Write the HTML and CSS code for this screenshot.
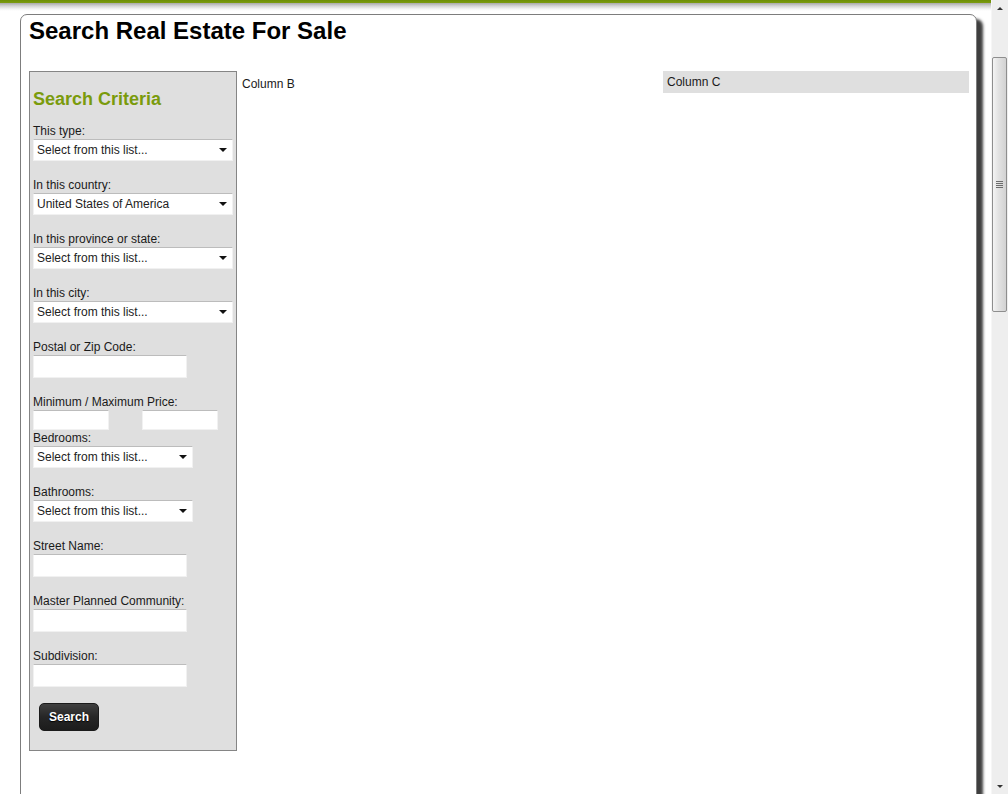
FILE: index.html
```html
<!DOCTYPE html>
<html>
<head>
  <title>Search Real Estate For Sale</title>
  <link rel="stylesheet" href="styles.css">
</head>
<body>
  <div class="window">
    <div class="page">
      <div class="topbar"></div>
      <div class="card">
        <h1>Search Real Estate For Sale</h1>
        <div class="columns">
          <form class="col-a" onsubmit="return false;">
            <h2>Search Criteria</h2>

            <div class="field">
              <label>This type:</label>
              <span class="select-wrap wide">
                <select><option>Select from this list...</option></select>
              </span>
            </div>

            <div class="field">
              <label>In this country:</label>
              <span class="select-wrap wide">
                <select><option>United States of America</option></select>
              </span>
            </div>

            <div class="field">
              <label>In this province or state:</label>
              <span class="select-wrap wide">
                <select><option>Select from this list...</option></select>
              </span>
            </div>

            <div class="field">
              <label>In this city:</label>
              <span class="select-wrap wide">
                <select><option>Select from this list...</option></select>
              </span>
            </div>

            <div class="field">
              <label>Postal or Zip Code:</label>
              <input type="text" class="text-box">
            </div>

            <div class="field price">
              <label>Minimum / Maximum Price:</label>
              <div class="price-row">
                <input type="text" class="text-box small">
                <input type="text" class="text-box small">
              </div>
            </div>

            <div class="field">
              <label>Bedrooms:</label>
              <span class="select-wrap narrow">
                <select><option>Select from this list...</option></select>
              </span>
            </div>

            <div class="field">
              <label>Bathrooms:</label>
              <span class="select-wrap narrow">
                <select><option>Select from this list...</option></select>
              </span>
            </div>

            <div class="field">
              <label>Street Name:</label>
              <input type="text" class="text-box">
            </div>

            <div class="field">
              <label>Master Planned Community:</label>
              <input type="text" class="text-box">
            </div>

            <div class="field">
              <label>Subdivision:</label>
              <input type="text" class="text-box">
            </div>

            <button class="btn-search">Search</button>
          </form>

          <div class="col-b">Column B</div>
          <div class="col-c">Column C</div>
        </div>
      </div>
    </div>

    <div class="scrollbar">
      <div class="sb-arrow up"></div>
      <div class="sb-thumb"><span class="grip"></span></div>
      <div class="sb-track"></div>
      <div class="sb-arrow down"></div>
    </div>
  </div>
</body>
</html>
```

FILE: styles.css
```css
html, body {
  margin: 0;
  padding: 0;
  height: 794px;
  overflow: hidden;
  background-color: #ffffff;
  font-family: "Liberation Sans", Arial, sans-serif;
  color: #1a1a1a;
}

.window {
  display: flex;
  height: 794px;
}

.page {
  flex: 1;
  min-width: 0;
}

/* green strip fading into grey at the very top */
.topbar {
  height: 11px;
  background: linear-gradient(to bottom,
    #6d8e05 0px, #7c9c10 3px,
    #a9a9a9 3px, #d4d4d4 6px, #f4f4f4 9px, #ffffff 11px);
}

.card {
  box-sizing: border-box;
  width: 957px;
  height: 900px;
  margin: 3px 0 0 20px;
  padding: 2px 7px 0 8px;
  border: 1px solid #7d7d7d;
  border-radius: 7px 7px 0 0;
  box-shadow: 6px 5px 3px #3f3f3f;
  background-color: #ffffff;
}

h1 {
  margin: 0;
  font-size: 24px;
  line-height: 28px;
  font-weight: bold;
  color: #000000;
}

.columns {
  display: grid;
  grid-template-columns: 208px 1fr 306px;
  align-items: start;
  margin-top: 26px;
}

/* left column: search form */
.col-a {
  box-sizing: border-box;
  width: 208px;
  margin: 0;
  padding: 0 3px 19px 3px;
  border: 1px solid #858585;
  background-color: #dfdfdf;
}

.col-a h2 {
  margin: 17px 0 11px;
  font-size: 18px;
  line-height: 21px;
  font-weight: bold;
  color: #7a9b0c;
}

.field {
  margin-bottom: 14px;
}

.field label {
  display: block;
  font-size: 12px;
  line-height: 15px;
  padding-top: 3px;
  color: #1a1a1a;
}

.field.price {
  margin-bottom: -2px;
}

.price-row {
  display: flex;
  gap: 33px;
}

.text-box {
  box-sizing: border-box;
  display: block;
  width: 154px;
  height: 23px;
  margin: 0;
  padding: 0 3px;
  border: 1px solid #f1f1f1;
  border-top-color: #bcbcbc;
  background-color: #ffffff;
  font-family: inherit;
  font-size: 12px;
  outline: none;
}

.text-box.small {
  width: 76px;
  height: 20px;
}

.select-wrap {
  position: relative;
  display: block;
  height: 22px;
}

.select-wrap.wide { width: 200px; }
.select-wrap.narrow { width: 160px; }

.select-wrap select {
  -webkit-appearance: none;
  appearance: none;
  box-sizing: border-box;
  display: block;
  width: 100%;
  height: 22px;
  margin: 0;
  padding: 0 18px 0 3px;
  border: 1px solid #f1f1f1;
  border-top-color: #bcbcbc;
  border-radius: 0;
  background-color: #ffffff;
  font-family: inherit;
  font-size: 12px;
  color: #222222;
  outline: none;
}

/* little black arrow on the right of each drop-down */
.select-wrap::after {
  content: "";
  position: absolute;
  right: 6px;
  top: 9px;
  border-left: 4px solid transparent;
  border-right: 4px solid transparent;
  border-top: 4px solid #111111;
  pointer-events: none;
}

.btn-search {
  display: block;
  width: 60px;
  height: 28px;
  margin: 16px 0 0 6px;
  padding: 0;
  border: 1px solid #1b1b1b;
  border-radius: 5px;
  background: linear-gradient(to bottom, #404040, #262626 50%, #1c1c1c);
  color: #ffffff;
  font-family: inherit;
  font-size: 12px;
  font-weight: bold;
  text-shadow: 0 1px 1px #000000;
  cursor: pointer;
}

.col-b {
  padding: 6px 5px;
  font-size: 12px;
  line-height: 15px;
}

.col-c {
  padding: 4px 4px 3px;
  font-size: 12px;
  line-height: 15px;
  background-color: #dfdfdf;
}

/* classic vertical scrollbar on the right edge */
.scrollbar {
  display: flex;
  flex-direction: column;
  width: 17px;
  height: 794px;
  background-color: #eeeeee;
  border-left: 1px solid #f6f6f6;
  box-sizing: border-box;
}

.sb-arrow {
  position: relative;
  height: 17px;
  flex: none;
}

.sb-arrow::after {
  content: "";
  position: absolute;
  left: 5px;
  border-left: 3px solid transparent;
  border-right: 3px solid transparent;
}

.sb-arrow.up::after {
  top: 7px;
  border-bottom: 3px solid #333333;
}

.sb-arrow.down::after {
  top: 8px;
  border-top: 3px solid #333333;
}

.sb-thumb {
  position: relative;
  flex: none;
  height: 255px;
  margin: 40px 0 0 0;
  width: 15px;
  box-sizing: border-box;
  border: 1px solid #8e8e8e;
  border-radius: 2px;
  background: linear-gradient(to right, #f4f4f4, #e3e3e3 40%, #d2d2d2);
}

.grip {
  position: absolute;
  left: 3px;
  top: 123px;
  width: 7px;
  height: 7px;
  background: repeating-linear-gradient(to bottom,
    #6d6d6d 0px, #6d6d6d 1px, transparent 1px, transparent 2px);
}

.sb-track {
  flex: 1;
}
```
